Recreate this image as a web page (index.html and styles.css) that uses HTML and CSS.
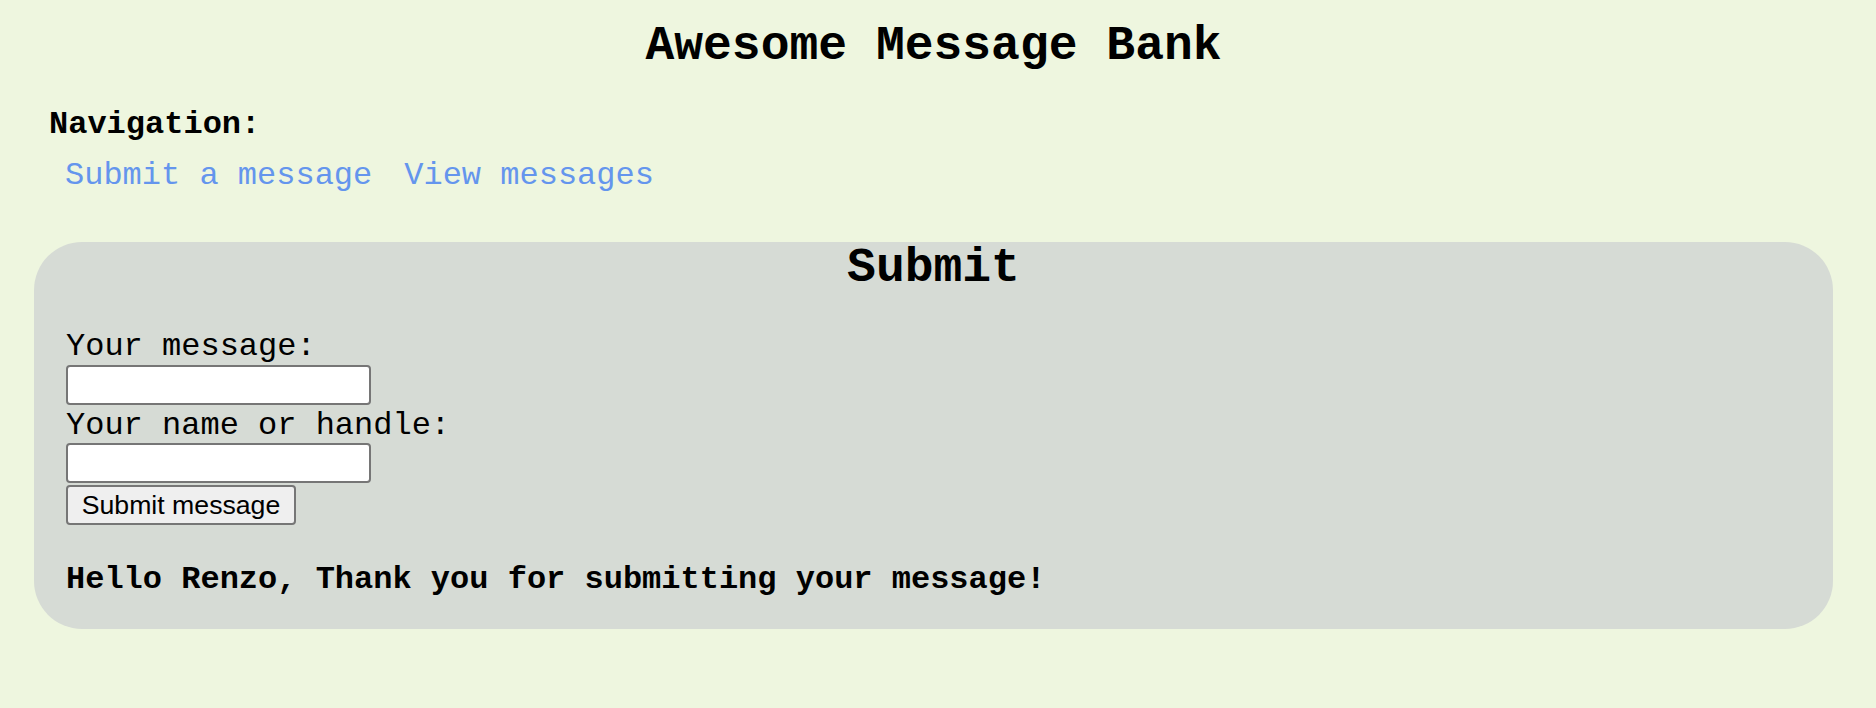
FILE: index.html
```html
<!DOCTYPE html>
<html lang="en">
<head>
<meta charset="utf-8">
<title>Awesome Message Bank</title>
<link rel="stylesheet" href="styles.css">
</head>
<body>
  <h1 class="title">Awesome Message Bank</h1>
  <nav class="nav">
    <div class="nav-label">Navigation:</div>
    <div class="nav-links">
      <a class="nav-link" href="#submit">Submit a message</a>
      <a class="nav-link" href="#view">View messages</a>
    </div>
  </nav>
  <section class="panel">
    <h2 class="panel-title">Submit</h2>
    <form class="form">
      <label class="field-label" for="msg">Your message:</label>
      <input class="field-input" id="msg" type="text">
      <label class="field-label" for="name">Your name or handle:</label>
      <input class="field-input field-input-second" id="name" type="text">
      <button class="submit-btn" type="button">Submit message</button>
    </form>
    <p class="thanks">Hello Renzo, Thank you for submitting your message!</p>
  </section>
</body>
</html>
```
FILE: styles.css
```css
html, body {
  margin: 0;
  background: #eef6df;
}
body {
  padding: 19px 43px 0 34px;
  font-family: "Liberation Mono", "Courier New", monospace;
  font-size: 32px;
  line-height: 36px;
  color: #000;
}
.title {
  margin: 0;
  font-size: 48px;
  line-height: 54px;
  font-weight: bold;
  text-align: center;
}
.nav {
  margin-top: 32px;
  padding-left: 15px;
}
.nav-label {
  font-weight: bold;
  padding-top: 4px;
  line-height: 32px;
}
.nav-links {
  margin-top: 17px;
  display: flex;
}
.nav-link {
  color: #6495ed;
  text-decoration: none;
  padding: 0 16px;
}
.panel {
  margin-top: 48px;
  background: #d6dbd5;
  border-radius: 48px;
  padding: 0 32px 34px;
}
.panel-title {
  margin: 0;
  padding-top: 8px;
  font-size: 48px;
  line-height: 36px;
  font-weight: bold;
  text-align: center;
}
.form {
  margin-top: 40px;
  display: flex;
  flex-direction: column;
  align-items: flex-start;
}
.field-label {
  display: block;
  padding-top: 6px;
  line-height: 30px;
}
.field-input {
  box-sizing: border-box;
  width: 305px;
  height: 40px;
  margin: 3px 0 0;
  border: 2px solid #767676;
  border-radius: 4px;
  background: #fff;
  padding: 2px 4px;
  font: 26px "Liberation Sans", Arial, sans-serif;
}
.field-input-second {
  margin-top: 2px;
}
.submit-btn {
  box-sizing: border-box;
  margin-top: 2px;
  height: 40px;
  width: 230px;
  padding: 0 12px;
  border: 2px solid #767676;
  border-radius: 4px;
  background: #efefef;
  color: #000;
  font-family: "Liberation Sans", Arial, sans-serif;
  font-size: 26.67px;
  line-height: 30px;
}
.thanks {
  margin: 34px 0 0;
  padding-top: 6px;
  line-height: 30px;
  font-weight: bold;
}
```
